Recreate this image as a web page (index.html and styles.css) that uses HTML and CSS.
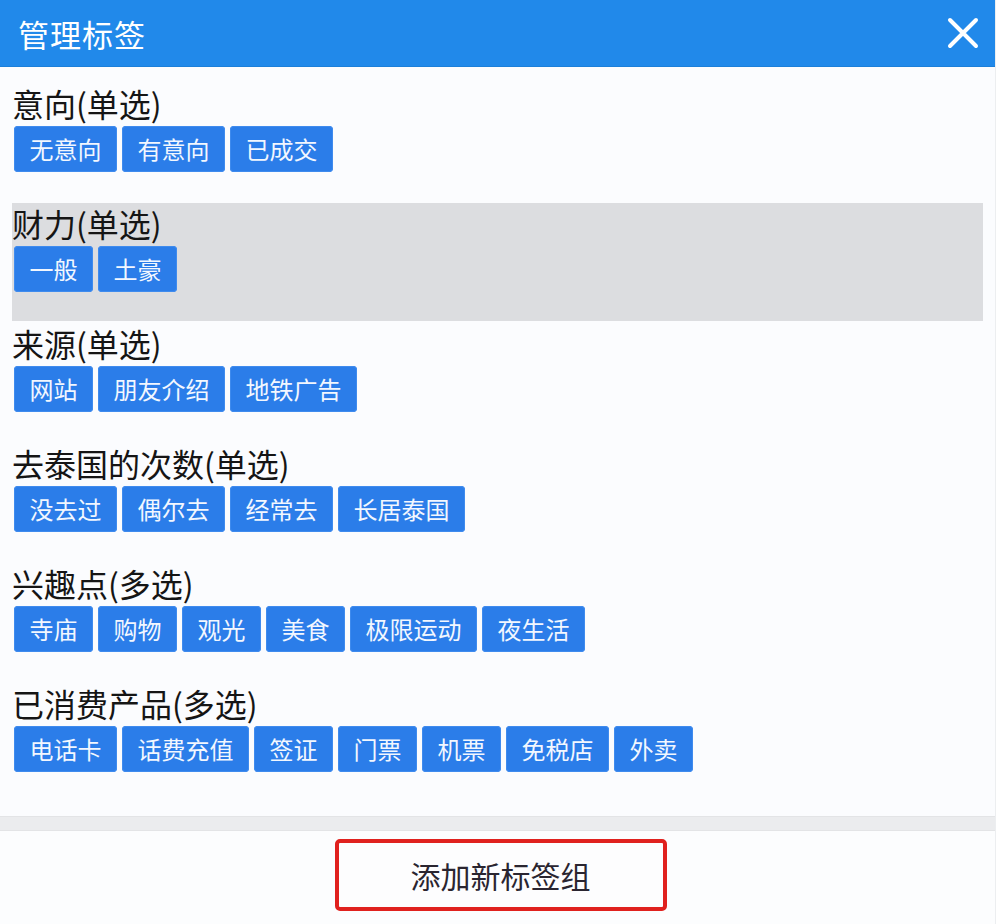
FILE: index.html
```html
<!DOCTYPE html>
<html lang="zh-CN">
<head>
<meta charset="utf-8">
<title>管理标签</title>
<link rel="stylesheet" href="styles.css">
</head>
<body>
<div class="dialog">
  <header class="header">
    <h1 class="title">管理标签</h1>
    <button class="close" type="button" aria-label="关闭">
      <svg width="32" height="32" viewBox="0 0 32 32"><path d="M3 3 L29 29 M29 3 L3 29" stroke="#fff" stroke-width="4" stroke-linecap="round" fill="none"/></svg>
    </button>
  </header>
  <main class="content">
    <section class="group">
      <div class="group-title">意向(单选)</div>
      <div class="tags"><span class="tag">无意向</span><span class="tag">有意向</span><span class="tag">已成交</span></div>
    </section>
    <section class="group group-active">
      <div class="group-title">财力(单选)</div>
      <div class="tags"><span class="tag">一般</span><span class="tag">土豪</span></div>
    </section>
    <section class="group">
      <div class="group-title">来源(单选)</div>
      <div class="tags"><span class="tag">网站</span><span class="tag">朋友介绍</span><span class="tag">地铁广告</span></div>
    </section>
    <section class="group">
      <div class="group-title">去泰国的次数(单选)</div>
      <div class="tags"><span class="tag">没去过</span><span class="tag">偶尔去</span><span class="tag">经常去</span><span class="tag">长居泰国</span></div>
    </section>
    <section class="group">
      <div class="group-title">兴趣点(多选)</div>
      <div class="tags"><span class="tag">寺庙</span><span class="tag">购物</span><span class="tag">观光</span><span class="tag">美食</span><span class="tag">极限运动</span><span class="tag">夜生活</span></div>
    </section>
    <section class="group">
      <div class="group-title">已消费产品(多选)</div>
      <div class="tags"><span class="tag">电话卡</span><span class="tag">话费充值</span><span class="tag">签证</span><span class="tag">门票</span><span class="tag">机票</span><span class="tag">免税店</span><span class="tag">外卖</span></div>
    </section>
  </main>
  <div class="divider"></div>
  <footer class="footer">
    <button class="add-btn" type="button">添加新标签组</button>
  </footer>
</div>
</body>
</html>
```
FILE: styles.css
```css
html, body {
  margin: 0;
  padding: 0;
  background: #fbfcfe;
}
body {
  font-family: "Noto Sans CJK SC", "Noto Sans", sans-serif;
  color: #151515;
}
.dialog {
  width: 996px;
  height: 924px;
  display: flex;
  flex-direction: column;
  background: #fbfcfe;
  border-right: 1px solid #eceef0;
  box-sizing: border-box;
  overflow: hidden;
}
.header {
  height: 67px;
  flex: none;
  background: #2189ea;
  border-bottom: 1px solid #1c7fd9;
  box-sizing: border-box;
  display: flex;
  align-items: center;
  justify-content: space-between;
  padding: 0 16px 0 18px;
}
.title {
  margin: 0;
  font-size: 31px;
  font-weight: 400;
  color: #fff;
  line-height: 1;
  letter-spacing: 1px;
}
.close {
  width: 32px;
  height: 32px;
  padding: 0;
  border: 0;
  background: none;
  display: flex;
}
.content {
  padding: 16px 12px 0 12px;
  height: 749px;
  box-sizing: border-box;
  flex: none;
}
.group {
  height: 118px;
  margin-bottom: 2px;
  box-sizing: border-box;
}
.group-active {
  background: #dcdde0;
}
.group-title {
  height: 40px;
  line-height: 40px;
  font-size: 32px;
  color: #151515;
}
.tags {
  display: flex;
  gap: 5px;
  margin-top: 3px;
  padding-left: 2px;
}
.tag {
  height: 46px;
  line-height: 46px;
  padding: 0 15.5px;
  box-sizing: border-box;
  background: #2b7de9;
  color: #f2f7ff;
  font-size: 24px;
  border-radius: 4px;
  box-shadow: inset 0 0 0 1px #3f8bee;
}
.divider {
  height: 15px;
  flex: none;
  background: #ebecee;
  border-top: 1px solid #e3e4e6;
  border-bottom: 1px solid #e3e4e6;
  box-sizing: border-box;
}
.footer {
  flex: 1;
  display: flex;
  justify-content: center;
  align-items: flex-start;
  padding-top: 8px;
  padding-left: 6px;
  background: #fcfdfe;
}
.add-btn {
  width: 332px;
  height: 72px;
  border: 4px solid #e0211e;
  border-radius: 5px;
  background: #fdfdfe;
  font-family: "Noto Sans CJK SC", "Noto Sans", sans-serif;
  font-size: 30px;
  color: #2a2530;
  padding: 0;
  cursor: pointer;
}
```
